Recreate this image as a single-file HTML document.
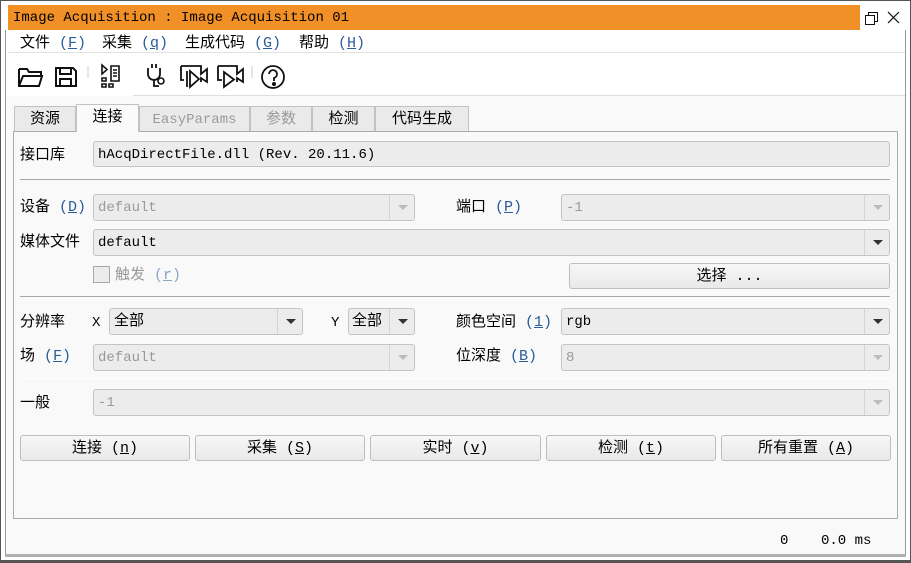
<!DOCTYPE html>
<html><head><meta charset="utf-8"><style>
*{box-sizing:border-box;margin:0;padding:0}
body{width:911px;height:563px;background:#fff;position:relative;overflow:hidden;font-family:"Liberation Mono","Noto Sans CJK SC",monospace;font-size:15px;color:#000}
.a{position:absolute}
.t{position:absolute;white-space:nowrap;line-height:20px}
.f{position:absolute;background:#ececec;border:1px solid #c4c4c4;border-radius:3px;font-size:14px;padding-left:4px;line-height:26px;white-space:nowrap}
.dis{color:#9a9a9a}
.arr{position:absolute;right:0;top:0;bottom:0;width:25px;border-left:1px solid #d4d4d4}
.arr:after{content:"";position:absolute;left:8px;top:10px;border-left:5px solid transparent;border-right:5px solid transparent;border-top:5px solid #333}
.dis .arr:after{border-top-color:#bbb}
.btn{position:absolute;background:linear-gradient(#f7f7f7,#e9e9e9);border:1px solid #bdbdbd;border-radius:3px;text-align:center;line-height:25px;font-size:15px}
.tab{position:absolute;top:106px;height:25px;background:#eaeaea;border:1px solid #c2c2c2;border-bottom:none;text-align:center;line-height:26px;font-size:15px}
.hr{position:absolute;left:20px;width:870px;height:1px;background:#a9a9a9}
u{text-decoration:underline}
</style></head><body>
<div class="a" style="left:0;top:0;width:911px;height:563px;border:1px solid #555"></div>
<div class="a" style="left:5px;top:30px;width:901px;height:527px;border-left:1px solid #999;border-right:1px solid #999;background:#f9f9f9"></div>
<div class="a" style="left:8px;top:5px;width:852px;height:25px;background:#f29028"></div>
<div class="t" style="left:13px;top:8px;font-size:14px">Image Acquisition : Image Acquisition 01</div>
<svg class="a" style="left:864px;top:10px" width="40" height="16"><rect x="1.5" y="5.5" width="9" height="9" fill="none" stroke="#111"/><path d="M4.5 5.5V2.5h9v9h-3" fill="none" stroke="#111"/><path d="M24 2l11 11M35 2L24 13" stroke="#111" stroke-width="1.2"/></svg>
<div class="a" style="left:6px;top:30px;width:899px;height:66px;background:#fff"></div>
<div class="a" style="left:8px;top:52px;width:897px;height:1px;background:#e2e2e2"></div>
<div class="t" style="left:20px;top:34px">文件 <span style="color:#2a5c9a">(<u>F</u>)</span></div>
<div class="t" style="left:102px;top:34px">采集 <span style="color:#2a5c9a">(<u>q</u>)</span></div>
<div class="t" style="left:185px;top:34px">生成代码 <span style="color:#2a5c9a">(<u>G</u>)</span></div>
<div class="t" style="left:299px;top:34px">帮助 <span style="color:#2a5c9a">(<u>H</u>)</span></div>
<svg class="a" style="left:14px;top:60px" width="280" height="32" fill="none" stroke="#111" stroke-width="2">
<path d="M5 9h8l2 3h12v4M5 9v17h20l3-10H9L5 26"/>
<path d="M42 8h17l3 3v15H42z M46 8v6h11V8 M46 26v-7h11v7"/>
<path d="M74 6v12" stroke="#ccc" stroke-width="1"/>
<path d="M88 5v9l5-4.5z M88 18h4v3h-4z M88 24h4v3h-4z M95 24h4v3h-4z M97 6h8v15h-8z M99 10h4M99 13h4M99 16h4" stroke-width="1.6"/>
<path d="M134 8v6a6 6 0 0 0 12 0V8 M138 8V4M142 8V4 M140 20v6h5" stroke-width="1.8"/>
<circle cx="147" cy="21" r="3" stroke-width="1.6"/>
<path d="M167 6h20v8l6-5v13l-6-4v4 M167 6v14h3 M173 11v16 M176 11l9 8-9 8z" stroke-width="1.8"/>
<path d="M204 6h19v8l6-5v13l-6-4v4 M204 6v14h4 M210 12v15l10-7.5z" stroke-width="1.8"/>
<path d="M238 6v12" stroke="#ccc" stroke-width="1"/>
<circle cx="259" cy="17" r="11" stroke-width="1.8"/>
<path d="M255 14a4 4 0 1 1 5 4v3" stroke-width="1.8"/><circle cx="260" cy="24" r="1" fill="#111"/>
</svg>
<div class="a" style="left:133px;top:95px;width:772px;height:1px;background:#ddd"></div>
<div class="tab" style="left:14px;width:62px">资源</div>
<div class="tab" style="left:76px;top:104px;height:28px;width:63px;background:#fafafa;z-index:2">连接</div>
<div class="tab dis" style="left:139px;width:111px;font-size:14px">EasyParams</div>
<div class="tab dis" style="left:250px;width:62px">参数</div>
<div class="tab" style="left:312px;width:63px">检测</div>
<div class="tab" style="left:375px;width:94px">代码生成</div>
<div class="a" style="left:13px;top:131px;width:885px;height:388px;background:#f9f9f9;border:1px solid #ababab"></div>
<div class="t" style="left:20px;top:146px">接口库</div>
<div class="f" style="left:93px;top:141px;width:797px;height:26px">hAcqDirectFile.dll (Rev. 20.11.6)</div>
<div class="hr" style="top:179px"></div>
<div class="t" style="left:20px;top:198px">设备 <span style="color:#2a5c9a">(<u>D</u>)</span></div>
<div class="f dis" style="left:93px;top:194px;width:322px;height:27px">default<div class="arr"></div></div>
<div class="t" style="left:456px;top:198px">端口 <span style="color:#2a5c9a">(<u>P</u>)</span></div>
<div class="f dis" style="left:561px;top:194px;width:329px;height:27px">-1<div class="arr"></div></div>
<div class="t" style="left:20px;top:233px">媒体文件</div>
<div class="f" style="left:93px;top:229px;width:797px;height:27px">default<div class="arr"></div></div>
<div class="a" style="left:93px;top:266px;width:17px;height:17px;border:1px solid #a8a8a8;background:#ececec"></div>
<div class="t dis" style="left:115px;top:266px">触发 <span style="color:#8aa6c8">(<u>r</u>)</span></div>
<div class="btn" style="left:569px;top:263px;width:321px;height:26px">选择 ...</div>
<div class="hr" style="top:296px"></div>
<div class="t" style="left:20px;top:313px">分辨率</div>
<div class="t" style="left:92px;top:313px;font-size:14px">X</div>
<div class="f" style="left:109px;top:308px;width:194px;height:27px;font-size:15px">全部<div class="arr"></div></div>
<div class="t" style="left:331px;top:313px;font-size:14px">Y</div>
<div class="f" style="left:348px;top:308px;width:67px;height:27px;font-size:15px;padding-left:3px">全部<div class="arr"></div></div>
<div class="t" style="left:456px;top:313px">颜色空间 <span style="color:#2a5c9a">(<u>1</u>)</span></div>
<div class="f" style="left:561px;top:308px;width:329px;height:27px">rgb<div class="arr"></div></div>
<div class="t" style="left:20px;top:347px">场 <span style="color:#2a5c9a">(<u>F</u>)</span></div>
<div class="f dis" style="left:93px;top:344px;width:322px;height:27px">default<div class="arr"></div></div>
<div class="t" style="left:456px;top:347px">位深度 <span style="color:#2a5c9a">(<u>B</u>)</span></div>
<div class="f dis" style="left:561px;top:344px;width:329px;height:27px">8<div class="arr"></div></div>
<div class="a" style="left:20px;top:378px;width:870px;height:1px;background:#fff"></div>
<div class="t" style="left:20px;top:394px">一般</div>
<div class="f dis" style="left:93px;top:389px;width:797px;height:27px">-1<div class="arr"></div></div>
<div class="btn" style="left:20px;top:435px;width:170px;height:26px">连接 (<u>n</u>)</div>
<div class="btn" style="left:195px;top:435px;width:170px;height:26px">采集 (<u>S</u>)</div>
<div class="btn" style="left:370px;top:435px;width:171px;height:26px">实时 (<u>v</u>)</div>
<div class="btn" style="left:546px;top:435px;width:170px;height:26px">检测 (<u>t</u>)</div>
<div class="btn" style="left:721px;top:435px;width:170px;height:26px">所有重置 (<u>A</u>)</div>
<div class="t" style="left:780px;top:531px;font-size:14px">0</div>
<div class="t" style="left:821px;top:531px;font-size:14px">0.0 ms</div>
<div class="a" style="left:5px;top:554px;width:901px;height:3px;background:#b0b0b0"></div>
<div class="a" style="left:0;top:560px;width:911px;height:3px;background:#555"></div>
</body></html>
